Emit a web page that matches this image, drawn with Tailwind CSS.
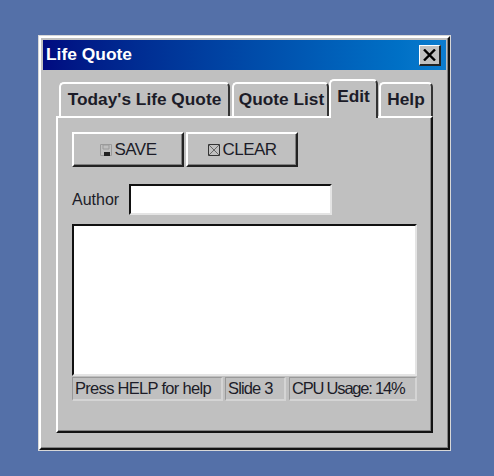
<!DOCTYPE html>
<html lang="en">
<head>
  <meta charset="UTF-8" />
  <title>Life Quote</title>
  <script src="https://cdn.jsdelivr.net/npm/@tailwindcss/browser@4"></script>
</head>
<body class="bg-[#5470a8] h-[476px] overflow-hidden font-['Liberation_Sans',Arial,sans-serif]">
  <div class="pt-[36px] pl-[39px]">
    <!-- Window -->
    <div class="w-[411px] h-[414px] bg-[#c0c0c0] border-t-2 border-l-2 border-t-white border-l-white border-r-2 border-b-2 border-r-[#111] border-b-[#111] shadow-[0_0_0_1px_#d8d8d8,inset_-1px_-1px_0_#808080] p-[2px] text-[#1c1c28]">
      <!-- Title bar -->
      <div class="h-[30px] pl-[3px] pr-[5px] flex items-center justify-between bg-gradient-to-r from-[#000a80] to-[#0c7ccf]">
        <span class="text-white font-bold text-[17.4px] leading-none">Life Quote</span>
        <button class="w-[22px] h-[21px] bg-[#c0c0c0] border-t border-l border-t-white border-l-white border-r-2 border-b-2 border-r-[#222] border-b-[#222] flex items-center justify-center">
          <svg width="13" height="12" viewBox="0 0 13 12"><path d="M1 0.5 L12 11.5 M12 0.5 L1 11.5" stroke="#000" stroke-width="2.4" fill="none"/></svg>
        </button>
      </div>

      <!-- Tabs -->
      <div class="pl-[13px] mt-[9px]">
        <div class="flex items-end h-[37px] pl-[3px] font-bold text-[17.3px] leading-none whitespace-nowrap">
          <div class="w-[171px] h-[34px] rounded-t-[5px] border-t-2 border-l-2 border-t-white border-l-white border-r-2 border-r-[#333] flex items-center justify-center">Today's Life Quote</div>
          <div class="w-[97px] h-[34px] ml-[2px] pl-[2px] rounded-t-[5px] border-t-2 border-l-2 border-t-white border-l-white border-r-2 border-r-[#333] flex items-center justify-center">Quote List</div>
          <div class="w-[49px] h-[39px] z-10 -mb-[2px] bg-[#c0c0c0] rounded-t-[5px] border-t-2 border-l-2 border-t-white border-l-white border-r-2 border-r-[#333] flex items-center justify-center pb-[6px]">Edit</div>
          <div class="w-[54px] h-[34px] ml-px rounded-t-[5px] border-t-2 border-l-2 border-t-white border-l-white border-r-2 border-r-[#333] flex items-center justify-center">Help</div>
        </div>

        <!-- Panel -->
        <div class="w-[377px] h-[317px] border-t-2 border-l-2 border-t-white border-l-white border-r-2 border-b-2 border-r-[#111] border-b-[#111] shadow-[inset_-1px_-1px_0_#808080] pt-[14px] pl-[14px]">
          <div class="flex gap-[2px] text-[17px] tracking-[-0.5px]">
            <button class="w-[112px] h-[35px] bg-[#c0c0c0] border-t-2 border-l-2 border-t-white border-l-white border-r-2 border-b-2 border-r-[#222] border-b-[#222] shadow-[inset_-1px_-1px_0_#808080] flex items-center justify-center gap-[1px]">
              <svg width="14" height="14" viewBox="0 0 14 14"><path d="M1.5 1.5h11v11h-11z" fill="none" stroke="#9a9a9a"/><path d="M4 2h6v4H4z" fill="#c0c0c0" stroke="#9a9a9a"/><path d="M5 9h6v4H5z" fill="#222"/></svg>
              <span>SAVE</span>
            </button>
            <button class="w-[112px] h-[35px] bg-[#c0c0c0] border-t-2 border-l-2 border-t-white border-l-white border-r-2 border-b-2 border-r-[#222] border-b-[#222] shadow-[inset_-1px_-1px_0_#808080] flex items-center justify-center gap-[1px]">
              <svg width="14" height="14" viewBox="0 0 14 14"><path d="M1.5 1.5h11v11h-11z" fill="none" stroke="#333"/><path d="M2 2l10 10M12 2L2 12" stroke="#666"/></svg>
              <span>CLEAR</span>
            </button>
          </div>

          <div class="flex items-center mt-[17px] text-[16px]">
            <label class="w-[57px]">Author</label>
            <div class="w-[203px] h-[31px] bg-white border-t-2 border-l-2 border-t-[#111] border-l-[#111] border-r-2 border-b-2 border-r-[#e4e4e4] border-b-[#e4e4e4]"></div>
          </div>

          <div class="w-[345px] h-[152px] mt-[9px] bg-white border-t-2 border-l-2 border-t-[#111] border-l-[#111] border-r-2 border-b-2 border-r-[#e4e4e4] border-b-[#e4e4e4]"></div>

          <!-- Status bar -->
          <div class="flex w-[345px] h-[24px] mt-px text-[16.5px] leading-none whitespace-nowrap">
            <div class="w-[151px] mr-[2px] border-t border-l border-t-[#999] border-l-[#999] border-r-2 border-b-2 border-r-[#d4d4d4] border-b-[#d4d4d4] flex items-center pl-[2px] tracking-[-0.7px]">Press HELP for help</div>
            <div class="w-[61px] mr-[3px] border-t border-l border-t-[#999] border-l-[#999] border-r-2 border-b-2 border-r-[#d4d4d4] border-b-[#d4d4d4] flex items-center pl-[2px] tracking-[-0.85px]">Slide 3</div>
            <div class="w-[128px] border-t border-l border-t-[#999] border-l-[#999] border-r-2 border-b-2 border-r-[#d4d4d4] border-b-[#d4d4d4] flex items-center pl-[2px] tracking-[-1.2px]">CPU Usage: 14%</div>
          </div>
        </div>
      </div>
    </div>
  </div>
</body>
</html>
